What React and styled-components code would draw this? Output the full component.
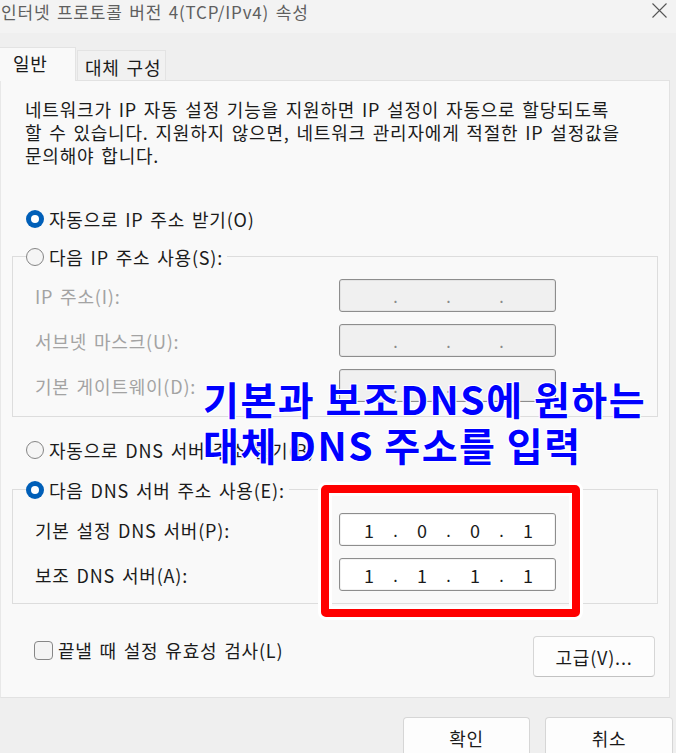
import React from "react";
import styled, { createGlobalStyle, css } from "styled-components";

const GlobalStyle = createGlobalStyle`
  html, body { margin: 0; padding: 0; background: #efefef; }
  body { font-family: "Noto Sans CJK KR", "Noto Sans", sans-serif; }
  *, *::before, *::after { box-sizing: border-box; }
`;

const Window = styled.div`
  position: relative;
  width: 676px;
  height: 753px;
  overflow: hidden;
  background: #efefef;
  color: #1b1b1b;
  font-size: 18px;
  letter-spacing: 0.8px;
  word-spacing: 2px;
`;

const TitleBar = styled.div`
  display: flex;
  align-items: flex-start;
  justify-content: space-between;
  height: 33px;
  background: #f3f3f3;
  padding: 0 9px 0 1px;
`;

const Title = styled.div`
  font-size: 17px;
  letter-spacing: 0.8px;
  line-height: 23px;
  color: #5f5f5f;
  white-space: nowrap;
`;

const CloseButton = styled.div`
  display: flex;
  width: 15px;
  height: 15px;
  margin-top: 3px;
  color: #555;
`;

const TabStrip = styled.div`
  display: flex;
  align-items: flex-end;
  height: 33px;
  margin-top: 14px;
`;

const Tab = styled.div`
  position: relative;
  z-index: ${(p) => (p.$active ? 1 : 0)};
  display: flex;
  align-items: center;
  height: ${(p) => (p.$active ? "34px" : "30px")};
  margin-bottom: ${(p) => (p.$active ? "-1px" : "0")};
  margin-left: ${(p) => (p.$active ? "0" : "1px")};
  width: ${(p) => (p.$active ? "76px" : "89px")};
  padding: ${(p) => (p.$active ? "0 0 3px 13px" : "2px 0 0 7px")};
  background: ${(p) => (p.$active ? "#f9f9f9" : "#f1f1f1")};
  border: 1px solid #e3e3e3;
  border-bottom: none;
  border-left: ${(p) => (p.$active ? "none" : "1px solid #e3e3e3")};
  white-space: nowrap;
`;

const Panel = styled.div`
  display: flex;
  flex-direction: column;
  width: 670px;
  height: 618px;
  background: #f9f9f9;
  border: 1px solid #e2e2e2;
  border-left-color: #e8e8e8;
`;

const Description = styled.p`
  margin: 17px 0 0 24px;
  line-height: 23px;
  white-space: nowrap;
`;

const RadioRow = styled.div`
  display: flex;
  align-items: center;
  gap: 5px;
  height: 26px;
  margin-top: ${(p) => p.$top || 0}px;
  padding-left: 25px;
  white-space: nowrap;
`;

const Radio = styled.span`
  flex: none;
  width: 18px;
  height: 18px;
  border-radius: 50%;
  ${(p) =>
    p.$checked
      ? css`
          display: flex;
          align-items: center;
          justify-content: center;
          background: #005fb8;
          &::after {
            content: "";
            width: 8px;
            height: 8px;
            border-radius: 50%;
            background: #fff;
          }
        `
      : css`
          border: 1px solid #858585;
          background: #f5f5f5;
        `}
`;

const GroupBox = styled.div`
  margin: ${(p) => p.$top}px 11px 0;
  border: 1px solid #dddddd;
`;

const GroupLegend = styled.div`
  display: flex;
  align-items: center;
  gap: 5px;
  width: fit-content;
  height: 26px;
  margin: -13px 0 0 13px;
  padding-right: 4px;
  background: #f9f9f9;
  white-space: nowrap;
`;

const FieldGrid = styled.div`
  display: grid;
  grid-template-columns: 304px 217px;
  row-gap: 12px;
  align-items: center;
  padding: ${(p) => p.$top}px 0 ${(p) => p.$bottom}px 22px;
`;

const FieldLabel = styled.span`
  color: ${(p) => (p.$disabled ? "#a3a3a3" : "#1b1b1b")};
  white-space: nowrap;
`;

const IpBox = styled.div`
  display: flex;
  align-items: center;
  width: 217px;
  height: 33px;
  padding-left: 9px;
  border: 1px solid #8d8d8d;
  border-radius: 3px;
  background: ${(p) => (p.$disabled ? "#f0f0f0" : "#ffffff")};
  box-shadow: inset 0 0 0 1px ${(p) => (p.$disabled ? "#e4e4e4" : "#f2f2f2")};
`;

const Octet = styled.span`
  width: 40px;
  text-align: center;
  font-size: 18px;
  letter-spacing: 0;
  line-height: 1;
`;

const Dot = styled.span`
  width: 13px;
  text-align: center;
  font-size: 16px;
  letter-spacing: 0;
  line-height: 1;
  color: ${(p) => (p.$disabled ? "#8a8a8a" : "#1b1b1b")};
`;

const BottomRow = styled.div`
  display: flex;
  justify-content: space-between;
  margin-top: 32px;
  padding: 0 14px 0 33px;
`;

const CheckRow = styled.label`
  display: flex;
  align-items: center;
  gap: 5px;
  align-self: flex-start;
  height: 26px;
  margin-top: 1px;
  white-space: nowrap;
`;

const CheckBox = styled.span`
  flex: none;
  width: 19px;
  height: 19px;
  border: 1px solid #878787;
  border-radius: 4px;
  background: #f4f4f4;
`;

const Button = styled.div`
  display: flex;
  align-items: center;
  justify-content: center;
  width: ${(p) => p.$w}px;
  height: 41px;
  background: #fdfdfd;
  border: 1px solid #d6d6d6;
  border-bottom-color: #c2c2c2;
  border-radius: 4px;
  white-space: nowrap;
`;

const Footer = styled.div`
  display: flex;
  justify-content: flex-end;
  gap: 15px;
  margin-top: 19px;
  padding-right: 3px;
`;

const Annotation = styled.div`
  position: absolute;
  left: 203px;
  top: 375px;
  font-size: 39px;
  font-weight: 700;
  line-height: 46px;
  letter-spacing: 1.5px;
  word-spacing: 0;
  color: #0000ff;
  white-space: nowrap;
  text-shadow: 1px 1px 0 #fff, -1px -1px 0 #fff, 1px -1px 0 #fff, -1px 1px 0 #fff;
`;

const AnnotationLine = styled.div``;

const Highlight = styled.div`
  position: absolute;
  left: 321px;
  top: 485px;
  width: 259px;
  height: 132px;
  border: 8px solid #ff0000;
  border-radius: 5px;
  box-shadow: 0 0 0 3px #ffffff, inset 0 0 0 3px #ffffff;
`;

function IpField({ values, disabled }) {
  const v = values || ["", "", "", ""];
  return (
    <IpBox $disabled={disabled}>
      <Octet>{v[0]}</Octet>
      <Dot $disabled={disabled}>.</Dot>
      <Octet>{v[1]}</Octet>
      <Dot $disabled={disabled}>.</Dot>
      <Octet>{v[2]}</Octet>
      <Dot $disabled={disabled}>.</Dot>
      <Octet>{v[3]}</Octet>
    </IpBox>
  );
}

export default function App() {
  return (
    <>
      <GlobalStyle />
      <Window>
        <TitleBar>
          <Title>인터넷 프로토콜 버전 4(TCP/IPv4) 속성</Title>
          <CloseButton>
            <svg width="15" height="15" viewBox="0 0 15 15">
              <path d="M0.5 0.5 L14.5 14.5 M14.5 0.5 L0.5 14.5" stroke="currentColor" strokeWidth="1.1" fill="none" />
            </svg>
          </CloseButton>
        </TitleBar>
        <TabStrip>
          <Tab $active>일반</Tab>
          <Tab>대체 구성</Tab>
        </TabStrip>
        <Panel>
          <Description>
            네트워크가 IP 자동 설정 기능을 지원하면 IP 설정이 자동으로 할당되도록
            <br />
            할 수 있습니다. 지원하지 않으면, 네트워크 관리자에게 적절한 IP 설정값을
            <br />
            문의해야 합니다.
          </Description>

          <RadioRow $top={39}>
            <Radio $checked />
            자동으로 IP 주소 받기(O)
          </RadioRow>

          <GroupBox $top={24}>
            <GroupLegend>
              <Radio />
              다음 IP 주소 사용(S):
            </GroupLegend>
            <FieldGrid $top={9} $bottom={14}>
              <FieldLabel $disabled>IP 주소(I):</FieldLabel>
              <IpField disabled />
              <FieldLabel $disabled>서브넷 마스크(U):</FieldLabel>
              <IpField disabled />
              <FieldLabel $disabled>기본 게이트웨이(D):</FieldLabel>
              <IpField disabled />
            </FieldGrid>
          </GroupBox>

          <RadioRow $top={20}>
            <Radio />
            자동으로 DNS 서버 주소 받기(B)
          </RadioRow>

          <GroupBox $top={26}>
            <GroupLegend>
              <Radio $checked />
              다음 DNS 서버 주소 사용(E):
            </GroupLegend>
            <FieldGrid $top={10} $bottom={12}>
              <FieldLabel>기본 설정 DNS 서버(P):</FieldLabel>
              <IpField values={["1", "0", "0", "1"]} />
              <FieldLabel>보조 DNS 서버(A):</FieldLabel>
              <IpField values={["1", "1", "1", "1"]} />
            </FieldGrid>
          </GroupBox>

          <BottomRow>
            <CheckRow>
              <CheckBox />
              끝낼 때 설정 유효성 검사(L)
            </CheckRow>
            <Button $w={122}>고급(V)...</Button>
          </BottomRow>
        </Panel>
        <Footer>
          <Button $w={127}>확인</Button>
          <Button $w={128}>취소</Button>
        </Footer>

        <Annotation>
          <AnnotationLine>기본과 보조DNS에 원하는</AnnotationLine>
          <AnnotationLine>대체 DNS 주소를 입력</AnnotationLine>
        </Annotation>
        <Highlight />
      </Window>
    </>
  );
}
